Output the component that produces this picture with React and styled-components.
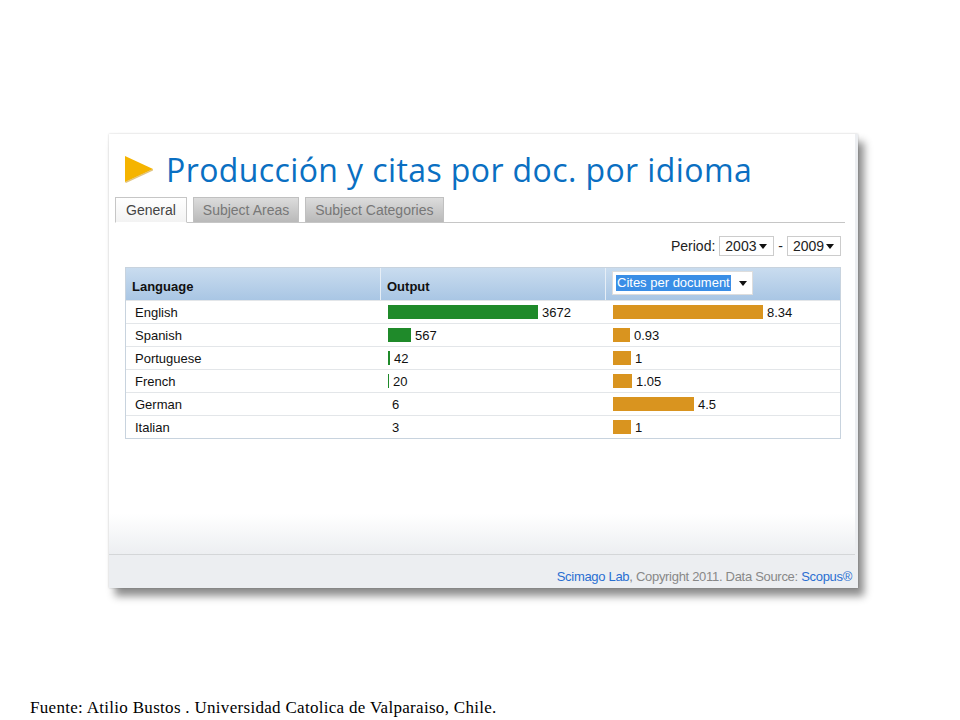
import React from "react";
import styled, { createGlobalStyle } from "styled-components";

const G = createGlobalStyle`
  body { margin:0; background:#fff; font-family:"Liberation Sans",Arial,sans-serif; }
`;
const Page = styled.div`width:960px;height:720px;position:relative;display:flex;flex-direction:column;`;
const Card = styled.div`
  margin:134px 0 0 109px; width:749px; height:454px; background:#eceef1;
  box-shadow: 6px 8px 8px rgba(0,0,0,0.45), 0 0 2px rgba(0,0,0,0.2);
  display:flex; flex-direction:column;
`;
const Panel = styled.div`
  height:421px; margin-right:3px; background:linear-gradient(#fff 0, #fff 380px, #eceef1 421px);
  border-bottom:1px solid #d4d6d8; box-sizing:border-box; padding:14px 10px 0 6px;
  display:flex; flex-direction:column;
`;
const Title = styled.div`
  display:flex; align-items:center; gap:12px; padding-left:9px; height:42px;
  font-family:"Open Sans",sans-serif; font-size:32px; letter-spacing:0.4px; color:#0a6fc2;
`;
const Tabs = styled.div`display:flex; gap:6px; margin-top:7px; border-bottom:1px solid #c6c6c6; height:25px;`;
const Tab = styled.div`
  padding:0 ${p=>p.active?10:9}px; font-size:14px; line-height:25px;
  color:${p=>p.active?"#444":"#777"};
  background:${p=>p.active?"linear-gradient(#fff,#f3f3f3)":"linear-gradient(#dcdcdc,#b9b9b9)"};
  border:1px solid ${p=>p.active?"#c6c6c6":"#c0c0c0"}; border-bottom:${p=>p.active?"1px solid #fff":"none"};
  box-sizing:border-box; height:${p=>p.active?26:25}px;
`;
const PeriodRow = styled.div`display:flex; justify-content:flex-end; align-items:center; gap:4px; margin-top:13px; font-size:14px; color:#222; padding-right:4px;`;
const Sel = styled.div`
  display:flex; align-items:center; justify-content:space-between; width:${p=>p.w}px; height:20px; border:1px solid #ccc;
  padding:0 6px 0 5px; box-sizing:border-box; font-size:14px; background:#fff;
`;
const Caret = styled.span`width:0;height:0;border-left:4px solid transparent;border-right:4px solid transparent;border-top:5px solid #111;`;
const Table = styled.div`margin:11px 0 0 10px; width:714px; border:1px solid #c8d3de;`;
const Row = styled.div`display:grid; grid-template-columns:254px 225px 1fr; height:${p=>p.h||23}px; border-top:${p=>p.first?"none":"1px solid #e3e6e9"}; box-sizing:border-box;`;
const Head = styled(Row)`background:linear-gradient(#c9dcef,#a9c6e4); font-weight:bold; font-size:13px; color:#111;`;
const HCell = styled.div`display:flex; align-items:${p=>p.top?"flex-start":"flex-end"}; padding:${p=>p.top?"3px 0 0 6px":"0 0 6px 6px"}; border-left:${p=>p.first?"none":"1px solid #e6eef6"};`;
const Cell = styled.div`display:flex; align-items:center; padding-left:${p=>p.pl||9}px; font-size:13px; color:#111; gap:4px;`;
const Bar = styled.div`height:14px; background:${p=>p.c};`;
const Drop = styled.div`
  display:flex; align-items:center; gap:8px; background:#fff; height:22px; padding:0 5px 0 3px; border:1px solid #ddd; font-weight:normal;
  span.t{background:#3a8ee6;color:#fff;padding:0 1px;font-size:13px;line-height:16px;}
`;
const Foot = styled.div`flex:1; display:flex; align-items:flex-end; justify-content:flex-end; padding:0 6px 4px 0; font-size:13px; color:#888; font-family:"Liberation Sans",sans-serif; letter-spacing:-0.3px;`;
const Link = styled.span`color:#2a6fd1;`;
const Source = styled.div`position:absolute; left:30px; top:698px; font-family:"Liberation Serif",serif; font-size:17px; letter-spacing:0.3px; color:#000;`;

const data=[["English",3672,150,"8.34",150],["Spanish",567,23,"0.93",17],["Portuguese",42,2,"1",18],["French",20,1,"1.05",19],["German",6,0,"4.5",81],["Italian",3,0,"1",18]];

export default function App(){
  return <Page><G/>
    <Card>
      <Panel>
        <Title>
          <svg width="30" height="28" viewBox="0 0 30 28"><path d="M1 1 L29 14 L1 27 Z" fill="#f5b400"/><path d="M1 27 L29 14 L29 15.5 L2 28Z" fill="#c48a00" opacity=".5"/></svg>
          Producción y citas por doc. por idioma
        </Title>
        <Tabs><Tab active>General</Tab><Tab>Subject Areas</Tab><Tab>Subject Categories</Tab></Tabs>
        <PeriodRow>Period: <Sel w={55}>2003<Caret/></Sel> - <Sel w={54}>2009<Caret/></Sel></PeriodRow>
        <Table>
          <Head h={32} first><HCell first>Language</HCell><HCell>Output</HCell><HCell top><Drop><span className="t">Cites per document</span><Caret/></Drop></HCell></Head>
          {data.map(d=><Row key={d[0]}>
            <Cell>{d[0]}</Cell>
            <Cell pl={d[2]>0?8:12}>{d[2]>0&&<Bar c="#1f8a2a" style={{width:d[2]}}/>}{d[1]}</Cell>
            <Cell pl={8}><Bar c="#d9941f" style={{width:d[4]}}/>{d[3]}</Cell>
          </Row>)}
        </Table>
      </Panel>
      <Foot><Link>Scimago Lab</Link>, Copyright 2011. Data Source:&nbsp;<Link>Scopus®</Link></Foot>
    </Card>
    <Source>Fuente: Atilio Bustos . Universidad Catolica de Valparaiso, Chile.</Source>
  </Page>;
}
